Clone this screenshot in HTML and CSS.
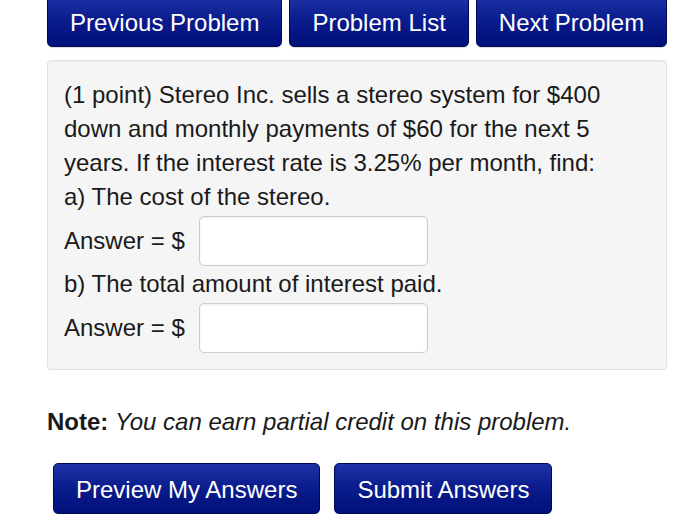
FILE: index.html
```html
<!DOCTYPE html>
<html>
<head>
<meta charset="utf-8">
<link rel="stylesheet" href="styles.css">
</head>
<body>
<div class="nav">
  <button class="btn">Previous Problem</button>
  <button class="btn">Problem List</button>
  <button class="btn">Next Problem</button>
</div>
<div class="problem">
  <p class="text">(1 point) Stereo Inc. sells a stereo system for $400<br>down and monthly payments of $60 for the next 5<br>years. If the interest rate is 3.25% per month, find:<br>a) The cost of the stereo.</p>
  <div class="answer"><span>Answer = $</span><input class="field" type="text"></div>
  <p class="text sub">b) The total amount of interest paid.</p>
  <div class="answer"><span>Answer = $</span><input class="field" type="text"></div>
</div>
<p class="note"><b>Note:</b> <i>You can earn partial credit on this problem.</i></p>
<div class="actions">
  <button class="btn big">Preview My Answers</button>
  <button class="btn big">Submit Answers</button>
</div>
</body>
</html>
```
FILE: styles.css
```css
html, body {
  margin: 0;
  padding: 0;
  background: #ffffff;
  font-family: "Liberation Sans", Arial, sans-serif;
  color: #1a1a1a;
}
.nav {
  display: flex;
  gap: 7px;
  margin: -5px 0 0 47px;
}
.btn {
  font-family: "Liberation Sans", Arial, sans-serif;
  font-size: 24px;
  color: #ffffff;
  height: 52px;
  padding: 4px 22px 0 22px;
  border: 1px solid #000a55;
  border-radius: 5px;
  background: linear-gradient(#1d33a6, #0a1b8c 50%, #00117a);
  box-shadow: 0 1px 1px rgba(0,0,0,0.15);
}
.problem {
  margin: 13px 0 0 47px;
  background: #f5f5f5;
  border: 1px solid #e1e1e1;
  border-radius: 4px;
  padding: 17px 0 16px 16px;
  box-sizing: border-box;
  width: 620px;
  box-shadow: inset 0 1px 1px rgba(0,0,0,0.04);
}
.text {
  margin: 0;
  font-size: 24px;
  line-height: 34px;
}
.text.sub {
  margin-top: 1px;
}
.answer {
  display: flex;
  align-items: center;
  height: 50px;
  margin-top: 2px;
  font-size: 24px;
}
.field {
  margin-left: 14px;
  width: 229px;
  height: 50px;
  box-sizing: border-box;
  background: #ffffff;
  border: 1px solid #cccccc;
  border-radius: 5px;
  box-shadow: inset 0 1px 2px rgba(0,0,0,0.08);
  font-size: 20px;
}
.note {
  margin: 35px 0 0 47px;
  font-size: 24px;
  line-height: 34px;
}
.actions {
  display: flex;
  gap: 14px;
  margin: 24px 0 0 53px;
}
.btn.big {
  height: 51px;
  padding-top: 2px;
}
```
